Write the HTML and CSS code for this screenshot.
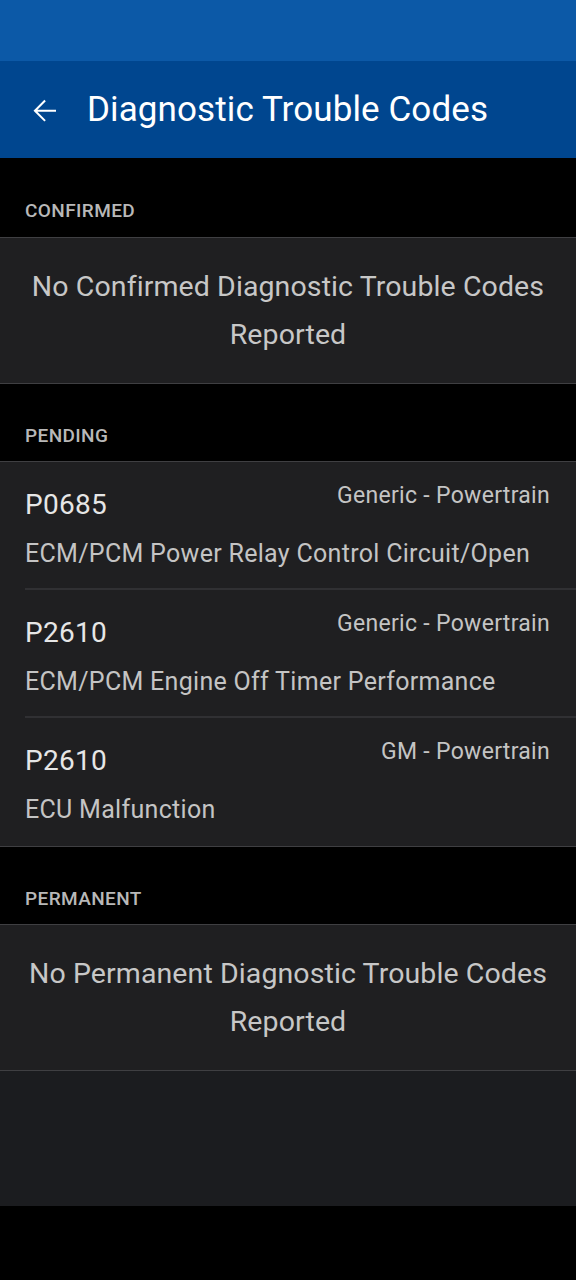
FILE: index.html
```html
<!DOCTYPE html>
<html lang="en">
<head>
<meta charset="utf-8">
<title>Diagnostic Trouble Codes</title>
<link rel="stylesheet" href="styles.css">
</head>
<body>
<div class="screen">
  <div class="statusbar"></div>
  <header class="appbar">
    <span class="back">
      <svg viewBox="0 0 24 24" width="36" height="36"><path fill="#fff" d="M20 11.1H7.6l5.6-5.6-.95-.95L5 11.8l7.25 7.25.95-.95-5.6-5.6H20z"/></svg>
    </span>
    <h1 class="title">Diagnostic Trouble Codes</h1>
  </header>
  <main class="content">
    <section class="section">
      <div class="caption">CONFIRMED</div>
      <div class="card empty">No Confirmed Diagnostic Trouble Codes Reported</div>
    </section>
    <section class="section">
      <div class="caption">PENDING</div>
      <div class="card list">
        <div class="row">
          <div class="row-top"><span class="code">P0685</span><span class="cat">Generic - Powertrain</span></div>
          <div class="desc">ECM/PCM Power Relay Control Circuit/Open</div>
        </div>
        <div class="row">
          <div class="row-top"><span class="code">P2610</span><span class="cat">Generic - Powertrain</span></div>
          <div class="desc">ECM/PCM Engine Off Timer Performance</div>
        </div>
        <div class="row">
          <div class="row-top"><span class="code">P2610</span><span class="cat">GM - Powertrain</span></div>
          <div class="desc">ECU Malfunction</div>
        </div>
      </div>
    </section>
    <section class="section">
      <div class="caption">PERMANENT</div>
      <div class="card empty">No Permanent Diagnostic Trouble Codes Reported</div>
    </section>
    <div class="filler"></div>
  </main>
  <div class="navbar"></div>
</div>
</body>
</html>
```
FILE: styles.css
```css
* { box-sizing: border-box; margin: 0; padding: 0; }
html, body { background: #000; }
body {
  font-family: Roboto, "Noto Sans", "Liberation Sans", sans-serif;
  width: 576px;
  height: 1280px;
  overflow: hidden;
}
.screen { display: flex; flex-direction: column; height: 1280px; }
.statusbar { height: 61px; background: #0c59a7; flex: none; }
.appbar {
  height: 97px;
  background: #00468f;
  display: flex;
  align-items: center;
  padding-left: 26px;
  flex: none;
}
.back { width: 36px; height: 36px; display: flex; margin-right: 25px; margin-top: 2px; }
.title {
  font-weight: 400;
  font-size: 35px;
  color: #fff;
  letter-spacing: 0.1px;
}
.content { flex: 1; display: flex; flex-direction: column; background: #000; }
.section { display: flex; flex-direction: column; }
.caption {
  height: 77px;
  padding: 40px 25px 0;
  font-size: 19px;
  line-height: 24px;
  font-weight: 500;
  letter-spacing: 0.4px;
  color: #b8b8b8;
  background: #000;
}
.section:first-child .caption { height: 79px; padding-top: 41px; }
.card {
  background: #1f1f21;
  border-top: 1px solid #3f3f42;
  border-bottom: 1px solid #3f3f42;
}
.empty {
  padding: 25px 10px 23px;
  text-align: center;
  font-size: 28.5px;
  line-height: 48px;
  color: #c7c7c7;
  letter-spacing: 0.1px;
  min-height: 147px;
}
.row {
  height: 128px;
  margin-left: 25px;
  padding: 21px 26px 0 0;
  border-bottom: 2px solid #303033;
}
.row:last-child { border-bottom: none; margin-left: 0; padding-left: 25px; }
.row-top { display: flex; justify-content: space-between; align-items: flex-start; }
.code { font-size: 28px; line-height: 40px; margin-top: 2px; color: #e6e6e6; letter-spacing: 0.3px; }
.cat { font-size: 23px; line-height: 26px; color: #c4c4c4; letter-spacing: 0.3px; }
.desc {
  margin-top: 13px;
  font-size: 25px;
  line-height: 32px;
  color: #c4c4c4;
  letter-spacing: 0.3px;
}
.filler { flex: 1; background: #1b1c1f; }
.navbar { height: 74px; background: #000; flex: none; }
```
